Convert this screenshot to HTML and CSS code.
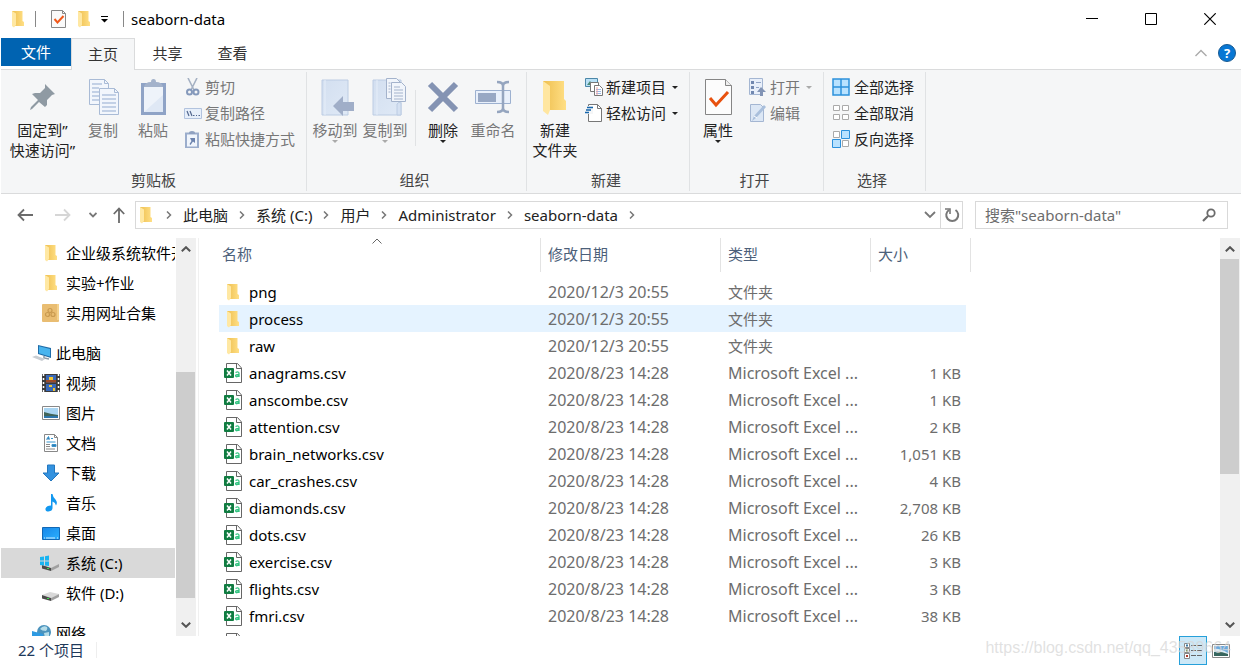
FILE: index.html
```
<!DOCTYPE html>
<html lang="zh-CN">
<head>
<meta charset="utf-8">
<title>seaborn-data</title>
<link rel="stylesheet" href="styles.css">
</head>
<body>
<svg class="defs" aria-hidden="true">
  <defs>
    <linearGradient id="gold" x1="0" x2="1"><stop offset="0" stop-color="#eebf50"/><stop offset="1" stop-color="#ffdf85"/></linearGradient>
    <linearGradient id="paper" x1="0" y1="0" x2="1" y2="1"><stop offset="0" stop-color="#d3dff0"/><stop offset="1" stop-color="#dfe9f6"/></linearGradient>
    <linearGradient id="screen" x1="0" y1="0" x2="1" y2="1"><stop offset="0" stop-color="#1787e8"/><stop offset="1" stop-color="#2bb0ff"/></linearGradient>
    <symbol id="i-folder" viewBox="0 0 18 18">
      <path d="M3 1h10.500v10l1.500 1v4H3z" fill="url(#gold)"/><path d="M3 1l4 2.500v11.500l-2 2.500-2-1.500z" fill="#ffe8a3"/>
    </symbol>
    <symbol id="i-bigfolder" viewBox="0 0 28 38">
      <path d="M2 3h21v18l2 2v9H3z" fill="url(#gold)"/><path d="M2 3l7 5v24l-2 5-5-4z" fill="#ffe6a0"/>
    </symbol>
    <symbol id="i-csv" viewBox="0 0 18 20">
      <path d="M2.500 .5h11l4 4.500v14.500h-15z" fill="#fff" stroke="#666"/><path d="M12.500 .5v5h5" fill="none" stroke="#666"/>
      <rect y="5" width="10" height="10" rx="1" fill="#107c41"/><path d="M3 7.500l4 5M7 7.500l-4 5" stroke="#fff" stroke-width="1.500"/>
      <path d="M11.500 9.500q3.500-1.500 3.500 1v3.500M15 11.500q-3.500 0-3.500 1.500 1 1.700 3.500-.5" fill="none" stroke="#33c481" stroke-width="1.300"/>
    </symbol>
    <symbol id="i-drive" viewBox="0 0 20 18">
      <path d="M2 11l8-3 9 2-8 4z" fill="#d9d9d9"/><path d="M2 11l9 3v3l-9-2.500z" fill="#4a4a4a"/><path d="M11 14l8-4v3l-8 4z" fill="#a0a0a0"/><path d="M7 14.500h2" stroke="#3be04a"/>
    </symbol>
    <symbol id="i-drop" viewBox="0 0 6 3"><path d="M0 0h6L3 3z" fill="currentColor"/></symbol>
    <symbol id="i-up" viewBox="0 0 10 6"><path d="M.8 5.300L5 1.200l4.200 4.100" fill="none" stroke="currentColor" stroke-width="2"/></symbol>
    <symbol id="i-right" viewBox="0 0 6 8"><path d="M1 .5l3.500 3.500L1 7.500" fill="none" stroke="#777" stroke-width="1.500"/></symbol>
  </defs>
</svg>

<header class="titlebar">
  <svg class="ic18"><use href="#i-folder"/></svg>
  <span class="bar"></span>
  <button class="quick" aria-label="属性"><svg class="ic18" viewBox="0 0 18 18"><path d="M1.500 .5h11l3 3v14h-14z" fill="#fafafa" stroke="#888"/><path d="M12.500 .5v3h3" fill="none" stroke="#888"/><path d="M4.500 9l3 3.500 6-6.500" fill="none" stroke="#f0581a" stroke-width="2"/></svg></button>
  <button class="quick" aria-label="新建文件夹"><svg class="ic18"><use href="#i-folder"/></svg></button>
  <button class="quick more" aria-label="自定义快速访问工具栏"><svg width="7" height="7" viewBox="0 0 7 7"><path d="M0 .5h7" stroke="#000"/><path d="M0 3h7L3.500 6.500z"/></svg></button>
  <span class="bar"></span>
  <h1>seaborn-data</h1>
  <div class="window-buttons">
    <button aria-label="最小化"><svg width="12" height="12" viewBox="0 0 12 12"><path d="M0 5.500h12" stroke="#000"/></svg></button>
    <button aria-label="最大化"><svg width="12" height="12" viewBox="0 0 12 12"><path d="M.5 .5h11v11H.5z" fill="none" stroke="#000"/></svg></button>
    <button aria-label="关闭"><svg width="12" height="12" viewBox="0 0 12 12"><path d="M.3 .3l11.400 11.400M11.700 .3L.3 11.700" stroke="#000" stroke-width="1.200"/></svg></button>
  </div>
</header>

<nav class="tabs">
  <button class="tab file">文件</button>
  <button class="tab active">主页</button>
  <button class="tab">共享</button>
  <button class="tab">查看</button>
  <div class="tab-tools">
    <button aria-label="最小化功能区"><svg width="12" height="8" viewBox="0 0 12 8"><path d="M.5 7L6 1.500 11.500 7" fill="none" stroke="#aaa" stroke-width="1.400"/></svg></button>
    <button class="help" aria-label="帮助">?</button>
  </div>
</nav>

<section class="ribbon">
  <div class="group clipboard">
    <div class="tools">
      <button class="big pin"><svg viewBox="0 0 28 28" width="28" height="28"><path d="M16 1l10 10-3 1-5 5v5l-2 2-6-5-7 7-2 1 1-3 7-7-6-6 3-1h5l5-5z" fill="#8f9aa3"/></svg><span>固定到”<br>快速访问”</span></button>
      <button class="big off"><svg viewBox="-1 0 32 38" width="32" height="38"><g fill="#f2f6fc" stroke="#a9bbd6"><path d="M1.500 1.500h15l4 4v21h-19z"/><path d="M11.500 10.500h15l4 4v22h-19z"/><path d="M16.500 1.500v4h4M26.500 10.500v4h4" fill="none"/><path d="M4 6h10M4 10h7M4 14h7M4 18h7M4 22h7M14 17h14M14 21h14M14 25h14M14 29h14M14 33h14" stroke="#93abd0"/></g></svg><span>复制</span></button>
      <button class="big off"><svg viewBox="-1 0 28 38" width="28" height="38"><path d="M1 5h25v32H1z" fill="#8fa3c6"/><path d="M4 9h19v25H4z" fill="#eef3fa"/><path d="M4 34l19-17v17z" fill="#dfe8f5"/><path d="M4 9q1-5 7-5a2.500 3 0 0 1 5 0q6 0 7 5z" fill="#a3b2cb"/></svg><span>粘贴</span></button>
      <div class="stack">
        <button class="small off"><svg viewBox="0 0 18 18"><path d="M4 0l6 12M13 0L7 12" stroke="#a5b1c3" stroke-width="1.600"/><g fill="none" stroke="#8599bb" stroke-width="2"><circle cx="5.500" cy="14" r="2.500"/><circle cx="12" cy="14" r="2.500"/></g></svg>剪切</button>
        <button class="small off"><svg viewBox="0 0 18 18"><path d="M.5 4.500h17v10H.5z" fill="#e7effa" stroke="#b2c3de"/><path d="M3 7l2 5M6 7l2 5M9 11.500h1.500M12 11.500h1M14.500 11.500h1.500" stroke="#52678f" stroke-width="1.200"/></svg>复制路径</button>
        <button class="small off"><svg viewBox="1 0 18 18"><path d="M3 3.500h12v14H3z" fill="#f0f5fc" stroke="#9badcc" stroke-width="2"/><path d="M6 3q0-2 3-2t3 2v1H6z" fill="#8fa1c0"/><path d="M7 8h5v5l-2-1.500L7.500 15l-1-1 2-3z" fill="#6c83ae"/></svg>粘贴快捷方式</button>
      </div>
    </div>
    <div class="caption">剪贴板</div>
  </div>
  <div class="group organize">
    <div class="tools">
      <button class="big off"><svg viewBox="-5 0 40 38" width="40" height="38"><path d="M2 2h26v35H2z" fill="url(#paper)" stroke="#bccce3"/><path d="M5 2v35" stroke="#e6eef9"/><path d="M13 28l10-10v6h11v9H23v5z" fill="#a0aec8"/></svg><span>移动到</span><svg class="drop"><use href="#i-drop"/></svg></button>
      <button class="big off"><svg viewBox="-8 0 42 38" width="42" height="38"><path d="M1 2h28v35H1z" fill="url(#paper)" stroke="#bccce3"/><path d="M5 2v35" stroke="#e6eef9"/><g fill="#f1f5fb" stroke="#a4b3cc"><path d="M14.500 .5h10l4 4v16h-14z"/><path d="M19.500 4.500h10l4 4v15h-14z"/><path d="M22 9h6M22 12h9M22 15h9M22 18h9M22 21h9M16.500 5h2M16.500 8h2M16.500 11h2M16.500 14h2"/></g><path d="M25 37V26q2-3 4-1v12z" fill="#d5e1f2" stroke="#bccce3"/></svg><span>复制到</span><svg class="drop"><use href="#i-drop"/></svg></button>
      <span class="rule"></span>
      <button class="big"><svg viewBox="0 0 32 32" width="32" height="32"><path d="M3 3l26 26M29 3L3 29" stroke="#8493b3" stroke-width="6"/></svg><span>删除</span><svg class="drop"><use href="#i-drop"/></svg></button>
      <button class="big off"><svg viewBox="0 0 36 36" width="36" height="36"><path d="M.5 11.500h35v13H.5z" fill="#e9f0fb" stroke="#9db1d0"/><path d="M3 14h18v9H3z" fill="#98a8c4"/><path d="M22 3q6 0 6 4v22q0 4-6 4M34 3q-6 0-6 4v22q0 4 6 4" fill="none" stroke="#95a5bf" stroke-width="2.500"/></svg><span>重命名</span></button>
    </div>
    <div class="caption">组织</div>
  </div>
  <div class="group create">
    <div class="tools">
      <button class="big"><svg width="28" height="38"><use href="#i-bigfolder"/></svg><span>新建<br>文件夹</span></button>
      <div class="stack">
        <button class="small"><svg viewBox="0 0 18 18"><path d="M.5 .5h12v8H.5z" fill="#b9e0f6" stroke="#4b87a8"/><path d="M2 7l3-4 3 4z" fill="#4c8b78"/><path d="M5.500 4.500h8v9h-8z" fill="#fff" stroke="#777"/><path d="M9.500 7.500h5l3 3v7h-8z" fill="#fff" stroke="#777"/><path d="M11 11.500h5M11 13.500h5M11 15.500h5" stroke="#9ab9e5"/><path d="M12 9v8" stroke="#f2a0a0"/></svg>新建项目<svg class="drop"><use href="#i-drop"/></svg></button>
        <button class="small"><svg viewBox="0 0 18 18"><path d="M3.500 .5h9l4 4v13h-13z" fill="#fff" stroke="#777"/><path d="M12.500 .5v4h4" fill="none" stroke="#777"/><path d="M1 2h7v8H0z" fill="#f5f6f7"/><path d="M2 3.500h6M1 6h5M0 8.500h4" stroke="#1766ab" stroke-width="1.500"/></svg>轻松访问<svg class="drop"><use href="#i-drop"/></svg></button>
      </div>
    </div>
    <div class="caption">新建</div>
  </div>
  <div class="group open">
    <div class="tools">
      <button class="big"><svg viewBox="-1 0 30 38" width="30" height="38"><path d="M1.500 1.500h20l6 6v29h-26z" fill="#fcfcfc" stroke="#858585"/><path d="M21.500 1.500v6h6" fill="#eee" stroke="#858585"/><path d="M6 20l6 7 12-13" fill="none" stroke="#e8510f" stroke-width="3"/></svg><span>属性</span><svg class="drop"><use href="#i-drop"/></svg></button>
      <div class="stack">
        <button class="small off"><svg viewBox="0 0 18 18"><path d="M.5 .5h13v16H.5z" fill="#e8effa" stroke="#a4b6d2"/><path d="M2 3h3v3H2zM2 8h3v3H2zM2 13h3v3H2z" fill="#7188b0"/><path d="M7 4.500h5M7 9.500h3" stroke="#91a5c7"/><path d="M8 14l4-5 5 5h-3v4h-3v-4z" fill="#8294b5"/></svg>打开<svg class="drop"><use href="#i-drop"/></svg></button>
        <button class="small off"><svg viewBox="0 0 18 18"><path d="M1.500 .5h10l3 3v14h-13z" fill="#dce7f5" stroke="#a4b6d2"/><path d="M3 17l2-5L15 1l2 2L7 14z" fill="#a9bfdc"/><path d="M5 12l3 2" stroke="#fff"/></svg>编辑</button>
      </div>
    </div>
    <div class="caption">打开</div>
  </div>
  <div class="group select">
    <div class="tools">
      <div class="stack">
        <button class="small"><svg viewBox="0 0 18 18"><path d="M1 1h16v16H1zM9 1v16M1 9h16" fill="#b9e2ff" stroke="#2d91dc" stroke-width="1.500"/></svg>全部选择</button>
        <button class="small"><svg viewBox="0 0 18 18"><path d="M1.500 1.500h6v5h-6zM10.500 1.500h6v5h-6zM1.500 10.500h6v5h-6zM10.500 10.500h6v5h-6z" fill="#fff" stroke="#aaa"/></svg>全部取消</button>
        <button class="small"><svg viewBox="0 0 18 18"><path d="M1.500 1.500h6v6h-6zM10.500 10.500h6v6h-6z" fill="#fff" stroke="#aaa"/><path d="M9.500 .5h8v8h-8zM.5 9.500h8v8h-8z" fill="#b9e2ff" stroke="#2d91dc"/></svg>反向选择</button>
      </div>
    </div>
    <div class="caption">选择</div>
  </div>
</section>

<section class="location">
  <button class="arrow" aria-label="返回"><svg width="16" height="14" viewBox="0 0 16 14"><path d="M16 7H2M7 1.500L1.500 7 7 12.500" fill="none" stroke="#6b6b6b" stroke-width="1.800"/></svg></button>
  <button class="arrow forward" aria-label="前进"><svg width="16" height="14" viewBox="0 0 16 14"><path d="M0 7h14M9 1.500L14.500 7 9 12.500" fill="none" stroke="#d6d6d6" stroke-width="1.800"/></svg></button>
  <button class="arrow recent" aria-label="最近位置"><svg width="8" height="6" viewBox="0 0 8 6"><path d="M.5 1L4 4.500 7.500 1" fill="none" stroke="#777" stroke-width="1.800"/></svg></button>
  <button class="arrow upward" aria-label="向上"><svg width="12" height="16" viewBox="0 0 12 16"><path d="M6 16V2M.8 7L6 1.500 11.200 7" fill="none" stroke="#6b6b6b" stroke-width="1.800"/></svg></button>
  <div class="address">
    <svg class="ic18"><use href="#i-folder"/></svg>
    <svg class="sep"><use href="#i-right"/></svg><a href="#">此电脑</a>
    <svg class="sep"><use href="#i-right"/></svg><a href="#">系统 (C:)</a>
    <svg class="sep"><use href="#i-right"/></svg><a href="#">用户</a>
    <svg class="sep"><use href="#i-right"/></svg><a href="#">Administrator</a>
    <svg class="sep"><use href="#i-right"/></svg><a href="#">seaborn-data</a>
    <svg class="sep"><use href="#i-right"/></svg>
    <button class="history" aria-label="以前的位置"><svg width="12" height="8" viewBox="0 0 12 8"><path d="M1 1l5 5 5-5" fill="none" stroke="#777" stroke-width="1.800"/></svg></button>
    <button class="refresh" aria-label="刷新"><svg width="16" height="16" viewBox="0 0 16 16"><path d="M5 3a6 6 0 1 0 6.500 0" fill="none" stroke="#777" stroke-width="2"/><path d="M1 2h5v5" fill="none" stroke="#777" stroke-width="1.600"/></svg></button>
  </div>
  <label class="search"><input type="text" placeholder='搜索"seaborn-data"' aria-label="搜索"><svg width="14" height="14" viewBox="0 0 14 14"><circle cx="9" cy="5" r="3.700" fill="none" stroke="#6b6b6b" stroke-width="1.800"/><path d="M6 8l-5 5" stroke="#6b6b6b" stroke-width="2.200"/></svg></label>
</section>

<main class="body">
  <aside class="tree">
    <ul>
      <li><svg class="ic18"><use href="#i-folder"/></svg>企业级系统软件开发</li>
      <li><svg class="ic18"><use href="#i-folder"/></svg>实验+作业</li>
      <li><svg class="ic18" viewBox="0 0 18 18"><rect width="17" height="18" rx="1" fill="#e9bd72"/><path d="M15 0h2v16h-2z" fill="#f4d28e"/><g fill="none" stroke="#c99a50" stroke-width="1.200"><circle cx="8" cy="6.500" r="2"/><circle cx="5.500" cy="10.500" r="2"/><circle cx="11" cy="10.500" r="2"/></g></svg>实用网址合集</li>
      <li class="root"><svg class="ic20" viewBox="0 0 20 18"><path d="M6 1l13 3v10L6 10z" fill="#1f6ca8"/><path d="M7 2.300l11 2.600v7.500L7 9.200z" fill="#48b4ee"/><path d="M12 12v2l5 1" stroke="#8c9aa6" fill="none" stroke-width="1.500"/><path d="M0 13l4-1.500 9 3.500-3 2z" fill="#c8cdd2"/></svg>此电脑</li>
      <li><svg class="ic18" viewBox="0 0 18 18"><path d="M0 0h18v18H0z" fill="#3b3b3b"/><path d="M4 1h10v7.500H4zM4 10h10v7H4z" fill="#3868b8"/><path d="M7 3h4v4H7z" fill="#f2c531"/><path d="M4 6h10v2.500H4z" fill="#9a4a28"/><path d="M7 11h3v2H7zM11 14h2v3h-2z" fill="#f2c531"/><path d="M1.500 0v18M16.500 0v18" stroke="#fff" stroke-width="1.500" stroke-dasharray="2"/></svg>视频</li>
      <li><svg class="ic18" viewBox="0 0 18 18"><path d="M.5 2.500h17v13H.5z" fill="#fff" stroke="#888"/><path d="M2 4h14v10H2z" fill="#a9d5f2"/><path d="M2 8q6 2 14 3v1H2z" fill="#40655a"/><path d="M2 12h14v2H2z" fill="#2d75ab"/></svg>图片</li>
      <li><svg class="ic18" viewBox="0 0 18 18"><path d="M2.500 .5h10l3 3v14h-13z" fill="#fff" stroke="#888"/><path d="M12.500 .5v3h3" fill="none" stroke="#888"/><path d="M4.500 5.500l2-3 1 3M9 4.500h2M4.500 8h9M10 10.500h4v2h-4z" fill="#3678ac" stroke="#3696cf"/><path d="M4 10.500h4M4 12.500h4M4 15h9" stroke="#888"/></svg>文档</li>
      <li><svg class="ic18" viewBox="0 0 18 18"><path d="M5.500 1h7v8H17l-8 8-8-8h4.500z" fill="#3492df" stroke="#2377bf"/></svg>下载</li>
      <li><svg class="ic18" viewBox="0 0 18 18"><path d="M9 0h1.500q.5 3.500 3 5.500 2.500 3 .5 6-.5-3-3.500-4V14q0 3-4 3.500-3.500 0-3-3 1-3 5.500-3z" fill="#1298f0"/></svg>音乐</li>
      <li><svg class="ic18" viewBox="0 0 18 18"><path d="M.5 3.500h17v12H.5z" fill="url(#screen)" stroke="#1268b5"/><path d="M2 14h1M4 14h9M15 14h1" stroke="#d5efff"/></svg>桌面</li>
      <li class="selected"><svg class="ic20"><use href="#i-drive"/><path d="M0 3l4-.5v4H0zM5 2.300l4-.7v5H5zM0 7.500h4v4l-4-.5zM5 7.500h4v4.500l-4-.5z" fill="#18b4f1"/></svg>系统 (C:)</li>
      <li><svg class="ic20"><use href="#i-drive"/></svg>软件 (D:)</li>
      <li class="root"><svg class="ic20" viewBox="0 0 20 18"><circle cx="12" cy="8" r="7" fill="#4b93bd"/><path d="M8 5q3-4 7-2 1 2-1 4-4 0-6-2M12 9l5-1v4l-4 2z" fill="#b5dce8"/><path d="M0 7l11 3v8H0z" fill="#2d9ae2"/></svg>网络</li>
    </ul>
    <div class="scroll"><svg class="chev"><use href="#i-up"/></svg><span class="thumb"></span><svg class="chev down"><use href="#i-up"/></svg></div>
  </aside>

  <section class="files">
    <table>
      <thead><tr><th class="name">名称<svg class="sort" width="10" height="6" viewBox="0 0 10 6"><path d="M.5 5.500L5 1l4.500 4.500" fill="none" stroke="#666"/></svg></th><th class="date">修改日期</th><th class="type">类型</th><th class="size">大小</th></tr></thead>
      <tbody>
        <tr><td><svg class="ic18"><use href="#i-folder"/></svg>png</td><td class="wide">2020/12/3 20:55</td><td>文件夹</td><td></td></tr>
        <tr class="hover"><td><svg class="ic18"><use href="#i-folder"/></svg>process</td><td class="wide">2020/12/3 20:55</td><td>文件夹</td><td></td></tr>
        <tr><td><svg class="ic18"><use href="#i-folder"/></svg>raw</td><td class="wide">2020/12/3 20:55</td><td>文件夹</td><td></td></tr>
        <tr><td><svg class="csv"><use href="#i-csv"/></svg>anagrams.csv</td><td class="wide">2020/8/23 14:28</td><td class="wide">Microsoft Excel ...</td><td>1 KB</td></tr>
        <tr><td><svg class="csv"><use href="#i-csv"/></svg>anscombe.csv</td><td class="wide">2020/8/23 14:28</td><td class="wide">Microsoft Excel ...</td><td>1 KB</td></tr>
        <tr><td><svg class="csv"><use href="#i-csv"/></svg>attention.csv</td><td class="wide">2020/8/23 14:28</td><td class="wide">Microsoft Excel ...</td><td>2 KB</td></tr>
        <tr><td><svg class="csv"><use href="#i-csv"/></svg>brain_networks.csv</td><td class="wide">2020/8/23 14:28</td><td class="wide">Microsoft Excel ...</td><td>1,051 KB</td></tr>
        <tr><td><svg class="csv"><use href="#i-csv"/></svg>car_crashes.csv</td><td class="wide">2020/8/23 14:28</td><td class="wide">Microsoft Excel ...</td><td>4 KB</td></tr>
        <tr><td><svg class="csv"><use href="#i-csv"/></svg>diamonds.csv</td><td class="wide">2020/8/23 14:28</td><td class="wide">Microsoft Excel ...</td><td>2,708 KB</td></tr>
        <tr><td><svg class="csv"><use href="#i-csv"/></svg>dots.csv</td><td class="wide">2020/8/23 14:28</td><td class="wide">Microsoft Excel ...</td><td>26 KB</td></tr>
        <tr><td><svg class="csv"><use href="#i-csv"/></svg>exercise.csv</td><td class="wide">2020/8/23 14:28</td><td class="wide">Microsoft Excel ...</td><td>3 KB</td></tr>
        <tr><td><svg class="csv"><use href="#i-csv"/></svg>flights.csv</td><td class="wide">2020/8/23 14:28</td><td class="wide">Microsoft Excel ...</td><td>3 KB</td></tr>
        <tr><td><svg class="csv"><use href="#i-csv"/></svg>fmri.csv</td><td class="wide">2020/8/23 14:28</td><td class="wide">Microsoft Excel ...</td><td>38 KB</td></tr>
        <tr><td><svg class="csv"><use href="#i-csv"/></svg></td><td></td><td></td><td></td></tr>
      </tbody>
    </table>
    <div class="scroll"><svg class="chev"><use href="#i-up"/></svg><span class="thumb"></span><svg class="chev down"><use href="#i-up"/></svg></div>
  </section>
</main>

<footer class="status">
  <span class="count">22 个项目</span>
  <div class="views">
    <button class="view on" aria-label="详细信息"><svg width="18" height="18" viewBox="0 0 18 18"><path d="M.5 1.500h5v4h-5zM.5 6.500h5v4h-5zM.5 11.500h5v5h-5z" fill="#fff" stroke="#888"/><path d="M2 3.500h2" stroke="#3a78a0" stroke-width="2"/><path d="M2 8.500h2" stroke="#8a9a50" stroke-width="2"/><path d="M2 14h2" stroke="#b03a2a" stroke-width="2"/><path d="M7 3.500h5M13 3.500h5M7 8.500h5M13 8.500h5M7 13.500h5M13 13.500h5" stroke="#666"/></svg></button>
    <button class="view" aria-label="大缩略图"><svg width="18" height="14" viewBox="0 0 18 14"><path d="M.5 .5h17v13H.5z" fill="#fff" stroke="#888"/><path d="M2 2h14v10H2z" fill="#6aa9df"/><path d="M2 5q5-1 14 4v1H2z" fill="#dcebf2"/><path d="M2 8q6-1 14 2v2H2z" fill="#37665e"/></svg></button>
  </div>
  <span class="watermark">https://blog.csdn.net/qq_43539664</span>
</footer>
</body>
</html>
```
FILE: styles.css
```
* { box-sizing: border-box; }
body {
  margin: 0;
  height: 100vh;
  display: flex;
  flex-direction: column;
  overflow: hidden;
  background: #fff;
  color: #111;
  font: 15px/20px "Noto Sans", "Noto Sans CJK SC", sans-serif;
}
button, input { font: inherit; color: inherit; border: 0; padding: 0; background: none; }
button { display: flex; align-items: center; justify-content: center; }
a { color: inherit; text-decoration: none; }
svg { display: block; flex: none; }
.defs { position: absolute; width: 0; height: 0; }
.ic18 { width: 18px; height: 18px; }
.ic20 { width: 20px; height: 18px; }

.titlebar { display: flex; flex: none; align-items: center; height: 38px; padding-left: 9px; }
.titlebar .bar { width: 1px; height: 16px; background: #888; margin: 0 7px 0 8px; }
.quick { margin-left: 7px; }
.quick.more { width: 22px; margin-left: 0; }
.titlebar h1 { margin: 0; font-size: 15px; font-weight: 400; color: #000; }
.window-buttons { margin-left: auto; display: flex; padding-right: 2px; }
.window-buttons button { width: 59px; height: 38px; }

.tabs { display: flex; flex: none; height: 31px; padding-left: 1px; }
.tab { width: 65px; height: 32px; padding-bottom: 2px; color: #333; }
.tab.file { width: 70px; height: 28px; padding: 0; background: #0063b1; color: #fff; }
.tab.active { width: 64px; background: #f5f6f7; border: 1px solid #dadbdc; border-bottom: 0; z-index: 1; }
.tab-tools { margin-left: auto; display: flex; align-items: center; gap: 11px; padding: 0 5px 2px 0; }
.help { width: 18px; height: 18px; border-radius: 9px; background: #0877d4; border: 1px solid #185a92; color: #fff; font-weight: 700; font-size: 13px; }

.ribbon { display: flex; flex: none; height: 125px; margin-left: 1px; padding: 2px 0; background: #f5f6f7; border-top: 1px solid #dadbdc; border-bottom: 1px solid #dadbdc; }
.group { display: flex; flex-direction: column; border-right: 1px solid #e0e2e4; padding: 2px 0 1px; }
.tools { display: flex; flex: 1; }
.caption { text-align: center; color: #444; height: 20px; padding-right: 7px; }
.clipboard { width: 306px; padding-left: 7px; }
.organize { width: 220px; padding-left: 3px; }
.create { width: 163px; padding-left: 3px; }
.open { width: 134px; padding-left: 3px; }
.select { width: 102px; padding-left: 2px; }
.big { width: 50px; flex: none; flex-direction: column; justify-content: flex-start; color: #222; }
.big.pin { width: 69px; margin-right: 1px; }
.big > svg:first-child { height: 46px; }
.big span { white-space: nowrap; }
.off { color: #777; }
.drop { width: 6px; height: 3px; color: #222; }
.off .drop { color: #aaa; }
.big .drop { margin-top: 0; }
.small .drop { margin-left: 3px; }
.stack { display: flex; flex-direction: column; align-items: flex-start; padding-left: 5px; }
.clipboard .stack, .open .stack, .select .stack { padding-left: 6px; }
.small { height: 26px; gap: 3px; white-space: nowrap; color: #222; }
.select .small { gap: 4px; }
.small.off { color: #777; }
.small > svg:first-child { width: 18px; height: 18px; }
.rule { width: 1px; height: 56px; background: #e0e2e4; margin: 16px 2px 0 5px; }

.location { display: flex; flex: none; align-items: center; height: 44px; padding: 0 13px 2px 17px; }
.arrow { width: 16px; }
.arrow.forward { margin-left: 22px; }
.arrow.recent { width: 8px; margin-left: 18px; }
.arrow.upward { width: 12px; margin-left: 16px; }
.address { display: flex; align-items: center; flex: 1; height: 28px; margin-left: 10px; border: 1px solid #d9d9d9; padding-left: 1px; color: #222; white-space: nowrap; }
.sep { width: 6px; height: 8px; margin: 0 11px; }
.address .history { margin-left: auto; width: 20px; height: 26px; }
.address .refresh { width: 22px; height: 26px; border-left: 1px solid #d9d9d9; }
.search { display: flex; align-items: center; flex: 0 0 253px; min-width: 0; height: 28px; margin-left: 12px; border: 1px solid #d9d9d9; padding: 0 11px 0 9px; }
.search input { flex: 1; min-width: 0; outline: 0; }
.search input::placeholder { color: #6d6d6d; opacity: 1; }

.body { display: flex; flex: 1; min-height: 0; }
.tree { display: flex; flex: 0 0 199px; padding-left: 1px; border-right: 1px solid #f0f0f0; }
.tree ul { list-style: none; margin: 0; padding: 0; flex: 0 0 174px; overflow: hidden; color: #000; }
.tree li { display: flex; align-items: center; gap: 6px; height: 30px; padding-left: 41px; white-space: nowrap; }
.tree li .ic20 { margin-left: -2px; }
.tree li.root { margin-top: 10px; padding-left: 33px; gap: 4px; }
.tree li.selected { background: #d9d9d9; }
.scroll { display: flex; flex-direction: column; align-items: center; flex: 0 0 20px; background: #f0f0f0; color: #555; padding-top: 8px; }
.tree .scroll { margin-left: 1px; }
.chev { width: 10px; height: 6px; }
.chev.down { transform: rotate(180deg); margin: auto 0 8px; }
.thumb { width: 100%; background: #cdcdcd; border-right: 1px solid #f0f0f0; }
.tree .thumb { height: 58%; margin-top: 120px; }
.files .thumb { height: 55%; margin-top: 7px; }

.files { display: flex; justify-content: space-between; flex: 1; min-width: 0; overflow: hidden; padding-left: 20px; padding-right: 1px; }
table { border-collapse: separate; border-spacing: 0; table-layout: fixed; width: 752px; align-self: flex-start; }
th { position: relative; height: 34px; padding: 0 0 2px 7px; text-align: left; font-weight: 400; color: #4c607a; border-right: 1px solid #e3e3e3; }
th.name { width: 322px; padding-left: 3px; }
th.date { width: 180px; }
th.type { width: 150px; }
.sort { position: absolute; left: 153px; top: 0; }
tbody::before { content: ""; display: block; height: 6px; }
td { height: 27px; padding: 0 0 0 7px; color: #6d6d6d; white-space: nowrap; }
td.wide { font-size: 16px; }
td:first-child { display: flex; align-items: center; gap: 7px; padding-left: 5px; color: #000; }
td:last-child { padding: 0 5px 0 0; border-right: 5px solid transparent; background-clip: padding-box; text-align: right; }
.hover td { background-color: #e5f3ff; }
.csv { width: 18px; height: 20px; }

.status { position: relative; display: flex; flex: none; align-items: flex-start; height: 30px; padding: 0 6px 0 18px; color: #1e395b; }
.count { padding-right: 12px; border-right: 1px solid #eee; margin-top: 6px; height: 16px; line-height: 16px; }
.views { display: flex; margin-left: auto; }
.view { width: 28px; height: 29px; }
.view.on { background: #cce8f7; border: 1px solid #26a0da; }
.watermark { position: absolute; right: 10px; top: 2px; font: 16px/20px "Liberation Sans", sans-serif; color: rgba(215, 215, 215, .75); }
```
